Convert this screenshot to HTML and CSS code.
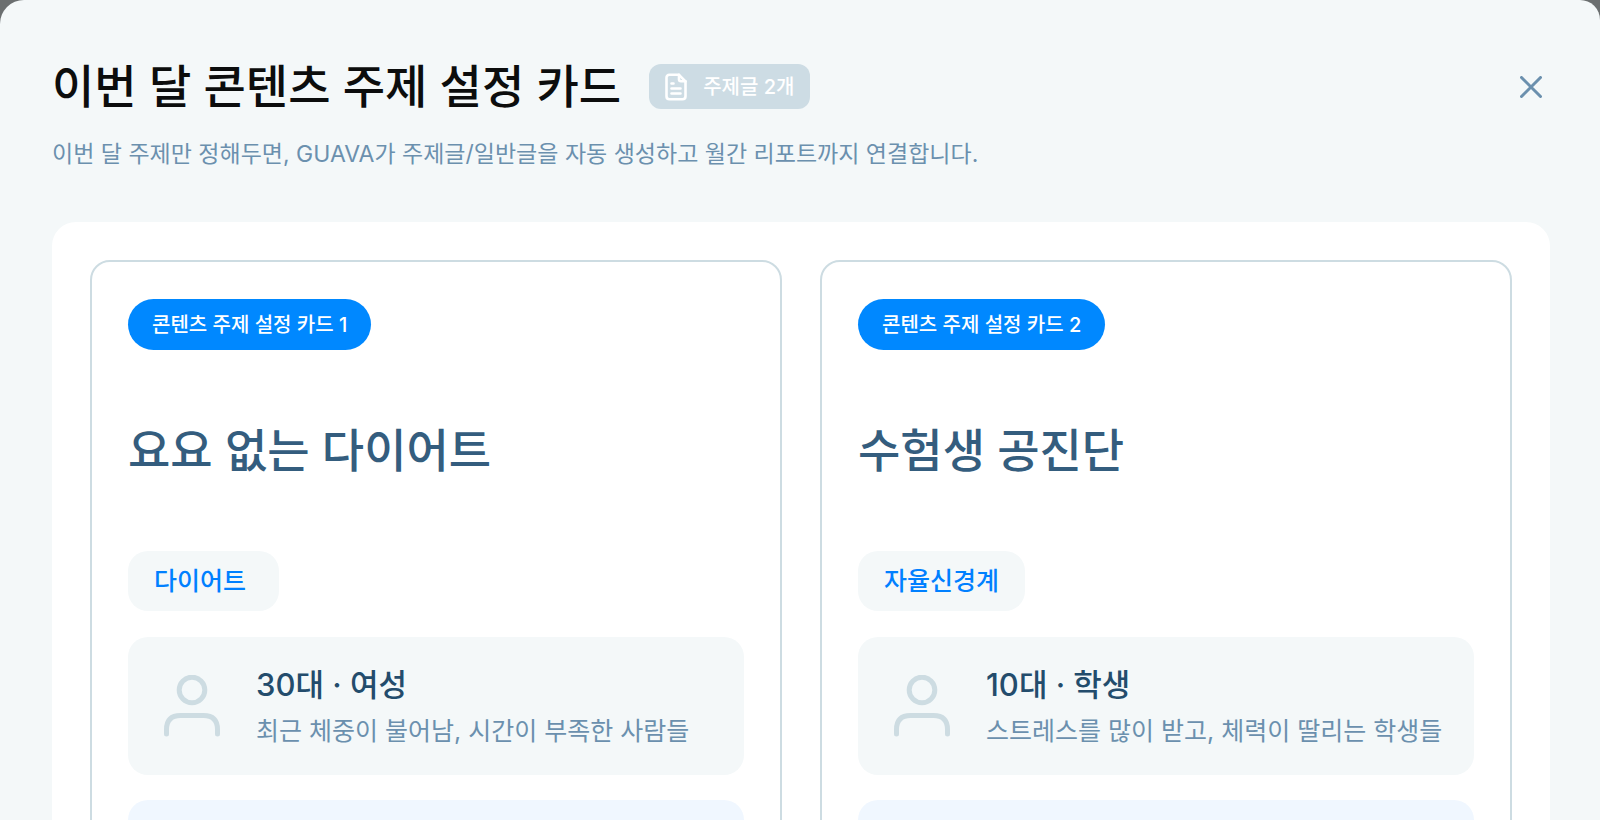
FILE: index.html
```html
<!DOCTYPE html>
<html lang="ko">
<head>
    <meta charset="UTF-8">
    <meta name="viewport" content="width=device-width, initial-scale=1.0">
    <title>이번 달 콘텐츠 주제 설정 카드</title>
    <link rel="stylesheet" href="styles.css">
</head>
<body>
    <main class="modal">
        <header class="modal-header">
            <div class="title-row">
                <h1>이번 달 콘텐츠 주제 설정 카드</h1>
                <span class="count-badge">
                    <svg class="doc-icon" viewBox="0 0 22 28" fill="none" stroke="currentColor" stroke-width="2.6" stroke-linecap="round" stroke-linejoin="round">
                        <path d="M14 1.800H4.500Q1.500 1.800 1.500 4.800V23.200Q1.500 26.200 4.500 26.200H17.500Q20.500 26.200 20.500 23.200V8.300Z"/>
                        <path d="M14 1.800V6.300Q14 8.300 16 8.300H20.500"/>
                        <path d="M6.500 10.500H8.500M6.500 15.500H15.500M6.500 20.500H15.500"/>
                    </svg>
                    주제글 2개
                </span>
                <button class="btn-close" type="button" aria-label="닫기">
                    <svg viewBox="0 0 22 22" fill="none" stroke="currentColor" stroke-width="3" stroke-linecap="round">
                        <path d="M1.500 1.500L20.500 20.500M20.500 1.500L1.500 20.500"/>
                    </svg>
                </button>
            </div>
            <p class="subtitle">이번 달 주제만 정해두면, GUAVA가 주제글/일반글을 자동 생성하고 월간 리포트까지 연결합니다.</p>
        </header>

        <section class="panel">
            <article class="card">
                <span class="pill">콘텐츠 주제 설정 카드 1</span>
                <h2>요요 없는 다이어트</h2>
                <span class="tag">다이어트</span>
                <div class="target">
                    <svg class="person-icon" viewBox="0 0 56 64" fill="none" stroke="currentColor" stroke-width="5" stroke-linecap="round">
                        <circle cx="28" cy="15" r="12.800"/>
                        <path d="M2.500 59V54.500Q2.500 40.500 16.500 40.500H39.500Q53.500 40.500 53.500 54.500V59"/>
                    </svg>
                    <div>
                        <h3>30대 · 여성</h3>
                        <p>최근 체중이 불어남, 시간이 부족한 사람들</p>
                    </div>
                </div>
                <div class="summary"></div>
            </article>

            <article class="card">
                <span class="pill">콘텐츠 주제 설정 카드 2</span>
                <h2>수험생 공진단</h2>
                <span class="tag">자율신경계</span>
                <div class="target">
                    <svg class="person-icon" viewBox="0 0 56 64" fill="none" stroke="currentColor" stroke-width="5" stroke-linecap="round">
                        <circle cx="28" cy="15" r="12.800"/>
                        <path d="M2.500 59V54.500Q2.500 40.500 16.500 40.500H39.500Q53.500 40.500 53.500 54.500V59"/>
                    </svg>
                    <div>
                        <h3>10대 · 학생</h3>
                        <p>스트레스를 많이 받고, 체력이 딸리는 학생들</p>
                    </div>
                </div>
                <div class="summary"></div>
            </article>
        </section>
    </main>
</body>
</html>
```

FILE: styles.css
```css
* {
    margin: 0;
    padding: 0;
    box-sizing: border-box;
}

body {
    background-color: #6b6f70;
    font-family: Inter, 'Noto Sans CJK KR', sans-serif;
}

.modal {
    height: 100vh;
    overflow: hidden;
    padding: 59px 50px 0 52px;
    border-radius: 24px 20px 0 0;
    background-color: #f4f8f9;
}

.title-row {
    display: flex;
    align-items: center;
}

h1 {
    color: #0c0d0d;
    font-size: 46px;
    font-weight: 500;
    line-height: 55px;
}

.count-badge {
    display: flex;
    align-items: center;
    gap: 16px;
    height: 45px;
    margin-left: 28px;
    padding: 0 16px;
    border-radius: 12px;
    background-color: #cddce4;
    color: white;
    font-size: 20px;
    font-weight: 500;
    line-height: 24px;
}

.doc-icon {
    width: 22px;
    height: 28px;
}

.btn-close {
    display: flex;
    margin-left: auto;
    padding: 8px;
    border: none;
    background: none;
    color: #6b90ae;
    cursor: pointer;
}

.btn-close svg {
    width: 22px;
    height: 22px;
}

.subtitle {
    margin-top: 25px;
    color: #6b90ae;
    font-size: 23px;
    line-height: 30px;
}

.panel {
    display: grid;
    grid-template-columns: 1fr 1fr;
    gap: 38px;
    margin-top: 53px;
    padding: 38px;
    border-radius: 24px;
    background-color: white;
}

.card {
    display: flex;
    flex-direction: column;
    align-items: flex-start;
    padding: 37px 36px;
    border: 2px solid #cddce2;
    border-radius: 20px;
}

.pill {
    padding: 2px 24px 0;
    border-radius: 26px;
    background-color: #0088ff;
    color: white;
    font-size: 20px;
    font-weight: 500;
    line-height: 49px;
}

h2 {
    margin: 72px 0 73px;
    color: #345d7e;
    font-size: 46px;
    font-weight: 500;
    line-height: 56px;
}

.tag {
    min-width: 151px;
    padding: 0 26px;
    border-radius: 20px;
    background-color: #f4f8f9;
    color: #0080ff;
    font-size: 25px;
    font-weight: 500;
    line-height: 60px;
}

.target {
    display: flex;
    align-items: center;
    align-self: stretch;
    gap: 36px;
    margin-top: 26px;
    padding: 24px 24px 22px 36px;
    border-radius: 20px;
    background-color: #f4f8f9;
}

.person-icon {
    flex: none;
    width: 56px;
    height: 64px;
    color: #cddce2;
}

h3 {
    color: #234c6c;
    font-size: 31px;
    font-weight: 500;
    line-height: 48px;
}

.target p {
    color: #6b90ae;
    font-size: 25px;
    line-height: 44px;
}

.summary {
    align-self: stretch;
    height: 138px;
    margin-top: 25px;
    border-radius: 20px;
    background-color: #f0f7ff;
}
```
